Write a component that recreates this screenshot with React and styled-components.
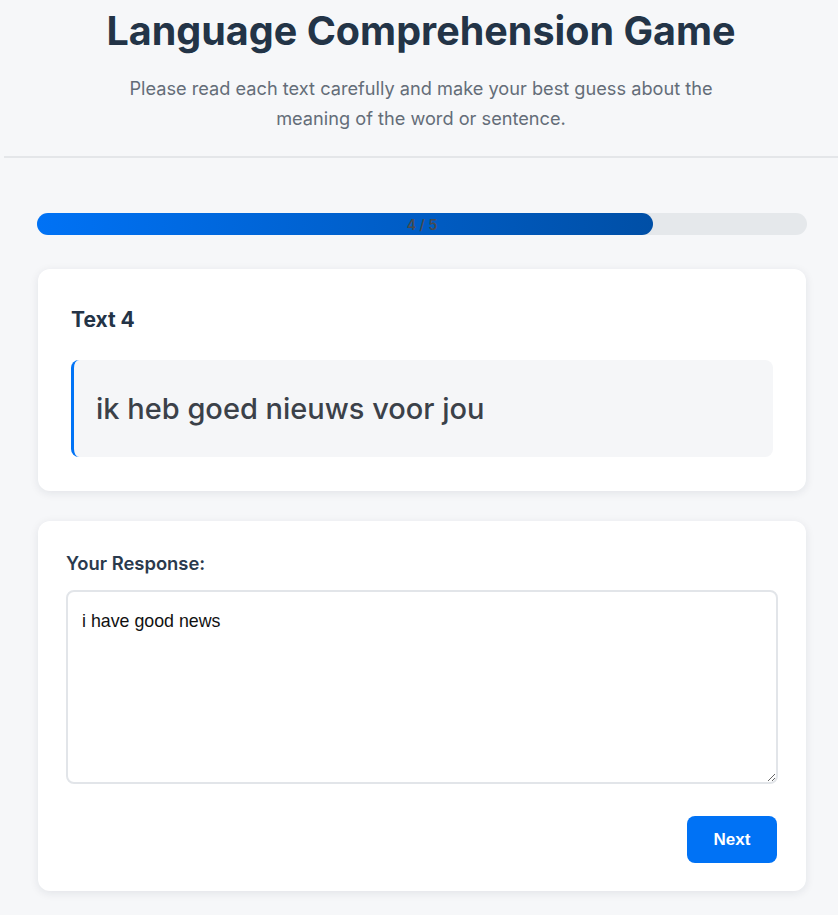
import React, { useState } from 'react';
import styled, { createGlobalStyle } from 'styled-components';

const GlobalStyle = createGlobalStyle`
  body {
    margin: 0;
    background: #f6f7f9;
    font-family: Inter, 'Noto Sans', sans-serif;
    color: #243447;
  }
`;

const Header = styled.header`
  margin-left: 4px;
  padding: 7px 0 23px;
  border-bottom: 2px solid #e4e6e9;
  text-align: center;
`;

const Title = styled.h1`
  margin: 0 0 18px;
  font-size: 39.5px;
  line-height: 48px;
  font-weight: 700;
  color: #233447;
`;

const Subtitle = styled.p`
  margin: 0 auto;
  max-width: 620px;
  font-size: 18.2px;
  line-height: 30px;
  color: #646d78;
`;

const Main = styled.main`
  width: 770px;
  margin: 55px 0 0 37px;
  display: flex;
  flex-direction: column;
`;

const Progress = styled.div`
  position: relative;
  height: 22px;
  border-radius: 11px;
  background: #e5e8eb;
  margin-bottom: 34px;
`;

const ProgressFill = styled.div`
  height: 100%;
  border-radius: 11px;
  background: linear-gradient(90deg, #0072f5 0%, #004fa6 100%);
`;

const ProgressLabel = styled.span`
  position: absolute;
  inset: 0;
  display: flex;
  align-items: center;
  justify-content: center;
  font-size: 14px;
  font-weight: 600;
  color: #474b50;
`;

const Card = styled.section`
  margin: 0 1px 30px;
  padding: ${p => p.$pad};
  background: #fff;
  border-radius: 12px;
  box-shadow: 0 2px 10px rgba(20, 30, 50, 0.09);
`;

const CardTitle = styled.h2`
  margin: 4px 0 26px;
  font-size: 21px;
  line-height: 28px;
  font-weight: 700;
  color: #243447;
`;

const Quote = styled.blockquote`
  margin: 0;
  padding: 29px 22px;
  background: #f5f6f8;
  border-left: 3px solid #0073f6;
  border-radius: 8px;
  font-size: 29px;
  line-height: 39px;
  font-weight: 500;
  color: #3b4149;
`;

const Label = styled.label`
  display: block;
  margin: 2px 0 15px;
  font-size: 18.4px;
  line-height: 24px;
  font-weight: 600;
  color: #2a3a4d;
`;

const TextArea = styled.textarea`
  display: block;
  box-sizing: border-box;
  width: 100%;
  height: 194px;
  padding: 17px 14px;
  border: 2px solid #e2e5e9;
  border-radius: 8px;
  font-family: 'Liberation Sans', Arial, sans-serif;
  font-size: 17.8px;
  line-height: 24px;
  color: #111;
  outline: none;
`;

const Actions = styled.div`
  display: flex;
  justify-content: flex-end;
  margin-top: 32px;
  margin-right: 1px;
`;

const Button = styled.button`
  width: 90px;
  height: 47px;
  border: none;
  border-radius: 8px;
  background: #0072f5;
  color: #fff;
  font-family: 'Liberation Sans', Arial, sans-serif;
  font-size: 17px;
  font-weight: 700;
  cursor: pointer;
`;

export default function App() {
  const [answer, setAnswer] = useState('i have good news');
  const current = 4;
  const total = 5;

  return (
    <>
      <GlobalStyle />
      <Header>
        <Title>Language Comprehension Game</Title>
        <Subtitle>
          Please read each text carefully and make your best guess about the
          meaning of the word or sentence.
        </Subtitle>
      </Header>
      <Main>
        <Progress>
          <ProgressFill style={{ width: `${(current / total) * 100}%` }} />
          <ProgressLabel>
            {current} / {total}
          </ProgressLabel>
        </Progress>

        <Card $pad="33px 33px 34px">
          <CardTitle>Text {current}</CardTitle>
          <Quote>ik heb goed nieuws voor jou</Quote>
        </Card>

        <Card $pad="28px 28px 28px">
          <Label htmlFor="response">Your Response:</Label>
          <TextArea
            id="response"
            value={answer}
            onChange={e => setAnswer(e.target.value)}
          />
          <Actions>
            <Button>Next</Button>
          </Actions>
        </Card>
      </Main>
    </>
  );
}
